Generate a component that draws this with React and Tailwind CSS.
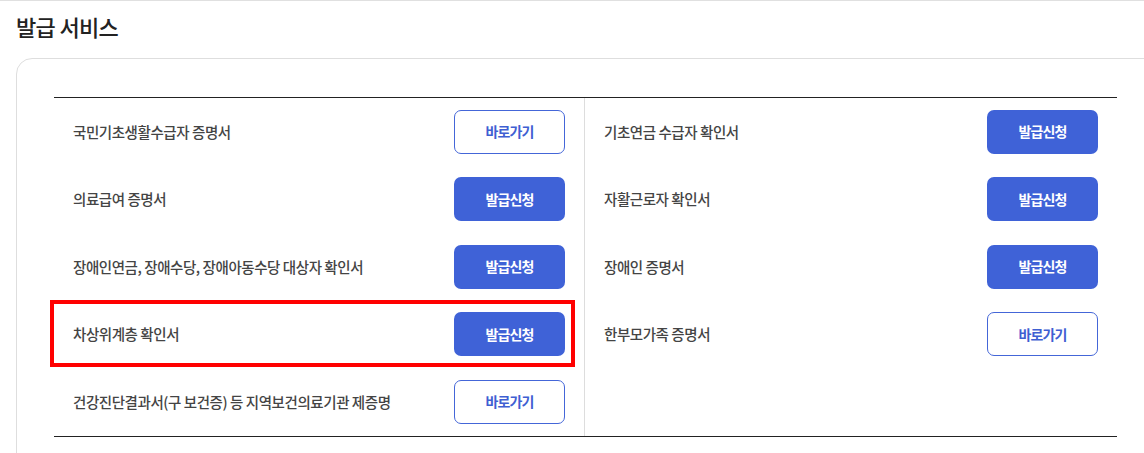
import React from "react";

const left = [
  { t: "국민기초생활수급자 증명서", b: "go" },
  { t: "의료급여 증명서", b: "apply" },
  { t: "장애인연금, 장애수당, 장애아동수당 대상자 확인서", b: "apply" },
  { t: "차상위계층 확인서", b: "apply", mark: true },
  { t: "건강진단결과서(구 보건증) 등 지역보건의료기관 제증명", b: "go" },
];
const right = [
  { t: "기초연금 수급자 확인서", b: "apply" },
  { t: "자활근로자 확인서", b: "apply" },
  { t: "장애인 증명서", b: "apply" },
  { t: "한부모가족 증명서", b: "go" },
];

function Btn({ kind }) {
  if (kind === "go") {
    return (
      <button className="w-[111px] h-[44px] rounded-[7px] border border-[#4466d8] bg-white text-[#3f5fd2] text-[14px] font-bold tracking-[-0.06em] flex items-center justify-center">
        바로가기
      </button>
    );
  }
  return (
    <button className="w-[111px] h-[44px] rounded-[7px] bg-[#3f62d7] text-white text-[14px] font-bold tracking-[-0.06em] flex items-center justify-center">
      발급신청
    </button>
  );
}

function Row({ item }) {
  return (
    <div className="relative h-[67.5px] flex items-center justify-between pl-[19px] pr-[19px]">
      <span className="text-[14.5px] text-[#444] tracking-[-0.03em] font-medium">{item.t}</span>
      <Btn kind={item.b} />
      {item.mark && (
        <div className="absolute left-[-4px] top-[-1px] w-[525px] h-[67px] border-4 border-[#ff0000] pointer-events-none" />
      )}
    </div>
  );
}

export default function App() {
  return (
    <div
      className="w-[1144px] h-[453px] overflow-hidden bg-white border-t border-[#e0e0e0]"
      style={{ fontFamily: '"Noto Sans CJK KR", "Noto Sans", sans-serif' }}
    >
      <h2 className="pl-4 pt-[9px] h-[57px] text-[22px] leading-[32px] font-medium text-[#222] tracking-[-0.03em]">
        발급 서비스
      </h2>
      <div className="ml-4 w-[1150px] rounded-tl-[16px] rounded-tr-[16px] border border-[#dedede] pt-[38px] pl-[37px] pb-6">
        <div className="w-[1063px] border-t border-b border-[#222] flex">
          <div className="w-[531px] border-r border-[#dddddd]">
            {left.map((it, i) => (
              <Row key={i} item={it} />
            ))}
          </div>
          <div className="flex-1">
            {right.map((it, i) => (
              <Row key={i} item={it} />
            ))}
          </div>
        </div>
      </div>
    </div>
  );
}
